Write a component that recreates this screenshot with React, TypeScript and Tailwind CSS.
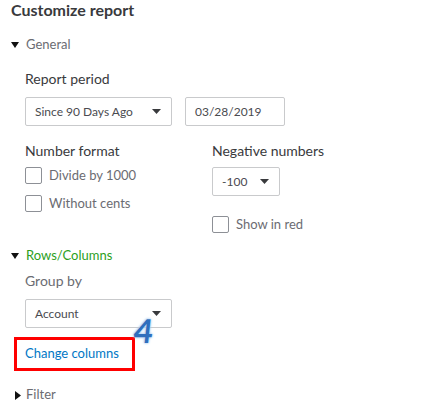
import React from "react";

const Caret = () => (
  <svg width="9" height="5" viewBox="0 0 9 5" className="shrink-0">
    <path d="M0 0h9L4.5 5z" fill="#393a3d" />
  </svg>
);

const SectionToggle = ({ label, open, color }: { label: string; open: boolean; color: string }) => (
  <div className="flex items-center h-[16px]">
    <div className="w-[15px] flex justify-start">
      {open ? (
        <svg width="8" height="6" viewBox="0 0 8 6"><path d="M0 0h8L4 6z" fill="#111" /></svg>
      ) : (
        <svg width="6" height="9" viewBox="0 0 6 9" className="ml-[4px]"><path d="M0 0l6 4.5L0 9z" fill="#111" /></svg>
      )}
    </div>
    <span className={`text-[13px] ${color}`}>{label}</span>
  </div>
);

const Select = ({ value, width }: { value: string; width: string }) => (
  <div className={`${width} h-[29px] border border-[#c9cacc] rounded-[2px] flex items-center justify-between pl-[9px] pr-[10px]`}>
    <span className="text-[12px] text-[#4a4b50]">{value}</span>
    <Caret />
  </div>
);

const Checkbox = ({ label }: { label: string }) => (
  <div className="flex items-center gap-[7px] h-[17px]">
    <div className="w-[17px] h-[17px] border border-[#8d9096] rounded-[2px] bg-white" />
    <span className="text-[13px] text-[#6b6c72]">{label}</span>
  </div>
);

export default function App() {
  return (
    <div className="w-[430px] h-[405px] bg-white overflow-hidden" style={{ fontFamily: "Lato, 'Open Sans', sans-serif" }}>
      <div className="pl-[11px] pt-[1px]">
        <h2 className="text-[16px] font-bold text-[#393a3d] leading-[18px]">Customize report</h2>

        <div className="mt-[18px]">
          <SectionToggle label="General" open color="text-[#6b6c72]" />
        </div>

        <div className="pl-[14px] mt-[18px]">
          <div className="text-[14px] text-[#393a3d] leading-[16px]">Report period</div>
          <div className="flex gap-[13px] mt-[10px]">
            <Select value="Since 90 Days Ago" width="w-[147px]" />
            <div className="w-[100px] h-[29px] border border-[#c9cacc] rounded-[2px] flex items-center pl-[9px]">
              <span className="text-[12px] text-[#4a4b50]">03/28/2019</span>
            </div>
          </div>

          <div className="flex mt-[17px]">
            <div className="w-[187px]">
              <div className="text-[14px] text-[#393a3d] leading-[16px]">Number format</div>
              <div className="mt-[8px] flex flex-col gap-[11px]">
                <Checkbox label="Divide by 1000" />
                <Checkbox label="Without cents" />
              </div>
            </div>
            <div>
              <div className="text-[14px] text-[#393a3d] leading-[16px]">Negative numbers</div>
              <div className="mt-[8px]">
                <Select value="-100" width="w-[68px]" />
              </div>
              <div className="mt-[20px]">
                <Checkbox label="Show in red" />
              </div>
            </div>
          </div>
        </div>

        <div className="mt-[15px]">
          <SectionToggle label="Rows/Columns" open color="text-[#2ca01c]" />
        </div>

        <div className="pl-[14px] mt-[9px]">
          <div className="text-[14px] text-[#6b6c72] leading-[16px]">Group by</div>
          <div className="mt-[10px] relative w-[147px]">
            <Select value="Account" width="w-[147px]" />
            <span
              className="absolute left-[109px] top-[15px] text-[33px] font-bold text-[#2f6fbd] leading-none -skew-x-6"
              style={{ textShadow: "0 0 1px #fff, 0 0 2px #9cc6f0, 0 0 3px #9cc6f0" }}
            >
              4
            </span>
          </div>
          <div className="mt-[9px] -ml-[11px] w-[121px] h-[34px] border-[3px] border-[#ff0000] flex items-center pl-[8px]">
            <span className="text-[13px] text-[#0077c5]">Change columns</span>
          </div>
        </div>

        <div className="mt-[16px]">
          <SectionToggle label="Filter" open={false} color="text-[#6b6c72]" />
        </div>
      </div>
    </div>
  );
}
